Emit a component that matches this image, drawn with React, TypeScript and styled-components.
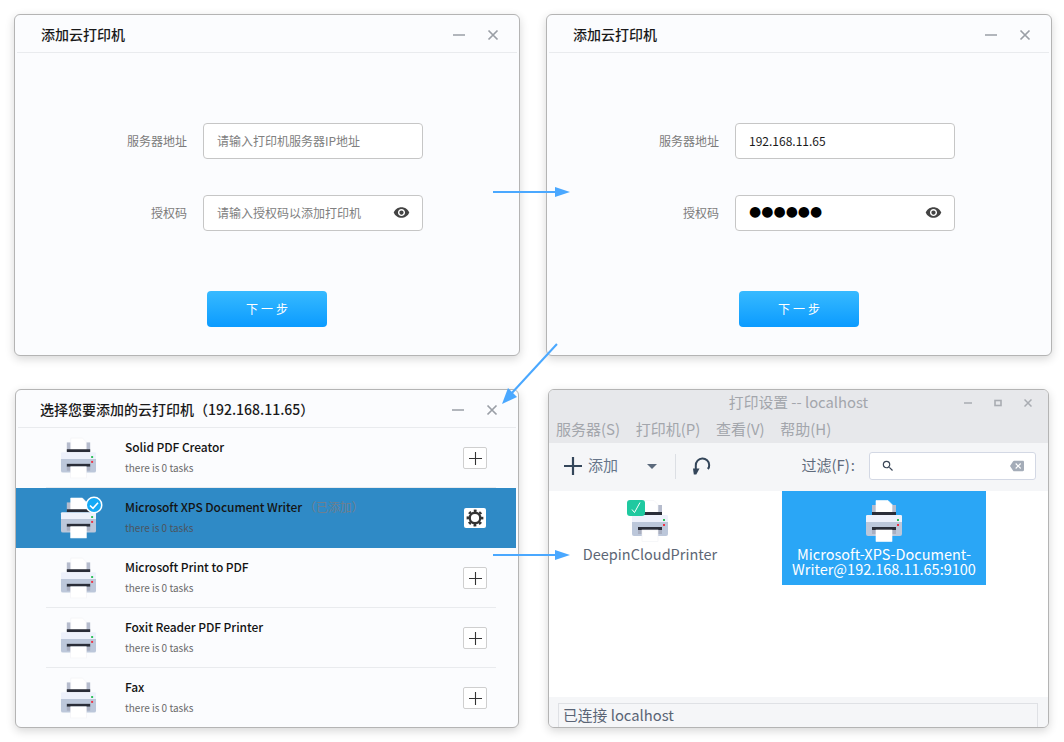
import React from "react";
import styled, { createGlobalStyle } from "styled-components";
import { MdVisibility, MdSearch, MdBackspace } from "react-icons/md";

const FONT = `"Noto Sans CJK SC", "Noto Sans", sans-serif`;

const Global = createGlobalStyle`
  html, body { margin: 0; padding: 0; background: #fff; }
  body { font-family: ${FONT}; overflow: hidden; }
  * { box-sizing: border-box; }
`;

const Desktop = styled.div`
  position: relative;
  width: 1064px;
  height: 742px;
  overflow: hidden;
  background: #fff;
`;

const Win = styled.section<{ $x: number; $y: number; $w: number; $h: number; $bg?: string }>`
  position: absolute;
  left: ${(p) => p.$x}px;
  top: ${(p) => p.$y}px;
  width: ${(p) => p.$w}px;
  height: ${(p) => p.$h}px;
  background: ${(p) => p.$bg || "#fbfcfe"};
  border: 1px solid #b4b4b4;
  border-radius: 6px;
  box-shadow: 0 3px 10px rgba(0, 0, 0, 0.16);
  display: flex;
  flex-direction: column;
  overflow: hidden;
`;

const Header = styled.header<{ $h: number; $pl: number; $pr: number }>`
  flex: none;
  height: ${(p) => p.$h}px;
  margin: 0 2px;
  padding: 1px ${(p) => p.$pr}px 0 ${(p) => p.$pl}px;
  display: flex;
  align-items: center;
  justify-content: space-between;
  border-bottom: 1px solid #e9ebee;
`;

const Title = styled.h1`
  margin: 0;
  font-size: 14px;
  font-weight: 500;
  color: #1a1a1a;
  white-space: nowrap;
`;

const Controls = styled.div`
  display: flex;
  align-items: center;
  gap: 22px;
  margin-top: 1px;
`;

const MinusIcon = () => (
  <svg width="12" height="12" viewBox="0 0 12 12">
    <path d="M0 6h12" stroke="#9a9fa6" strokeWidth="1.6" />
  </svg>
);
const CloseIcon = () => (
  <svg width="12" height="12" viewBox="0 0 12 12">
    <path d="M1.5 1.5l9 9M10.5 1.5l-9 9" stroke="#9a9fa6" strokeWidth="1.7" />
  </svg>
);

const Form = styled.div`
  padding: 70px 0 0 0;
  display: flex;
  flex-direction: column;
  gap: 36px;
`;

const Field = styled.div`
  display: grid;
  grid-template-columns: 172px 220px;
  column-gap: 16px;
  align-items: center;
  height: 36px;
`;

const Label = styled.label`
  font-size: 12px;
  color: #7b7b7b;
  text-align: right;
  padding-bottom: 2px;
`;

const InputBox = styled.div`
  height: 36px;
  border: 1px solid #c6c6c6;
  border-radius: 4px;
  background: #fff;
  display: flex;
  align-items: center;
  justify-content: space-between;
  padding: 0 13px 2px 13px;
  font-size: 12px;
`;

const Placeholder = styled.span`
  color: #808080;
`;
const Value = styled.span`
  color: #1b1b1b;
`;
const Dots = styled.span`
  font-family: "DejaVu Sans", sans-serif;
  font-size: 14px;
  color: #000;
  line-height: 1;
  margin-top: -3px;
`;
const EyeWrap = styled.span`
  display: flex;
  color: #444;
  font-size: 17px;
  margin-right: -1px;
`;

const NextButton = styled.button`
  display: block;
  margin: 60px auto 0;
  width: 120px;
  height: 36px;
  border: none;
  border-radius: 4px;
  background: linear-gradient(#37baff, #0b9bff);
  color: #fff;
  font-family: ${FONT};
  font-size: 12px;
  letter-spacing: 3px;
  padding: 0 0 2px 3px;
`;

const PrinterIcon = ({ paper = "#fff", edge = "#f1f2f5" }: { paper?: string; edge?: string }) => (
  <svg width="38" height="42" viewBox="0 0 38 42">
    <rect x="7" y="5" width="24" height="9" fill="#b6bccd" />
    <path d="M11 .5h12l4 4V14H11z" fill={paper} stroke={edge} strokeWidth=".6" />
    <rect x="7" y="12" width="24" height="3" fill="#2a2d38" />
    <path d="M2 15h34a1.500 1.500 0 0 1 1 1v6H1v-6a1.500 1.500 0 0 1 1-1z" fill="#eef1fb" />
    <path d="M1 22h36v12a2 2 0 0 1-2 2H3a2 2 0 0 1-2-2z" fill="#bcc7da" />
    <rect x="32" y="19" width="2" height="2" fill="#2ec05a" />
    <rect x="32" y="24" width="2" height="2" fill="#ee3344" />
    <rect x="7" y="27" width="24" height="3" fill="#2a2d38" />
    <rect x="7" y="30" width="24" height="4" fill="#a9afc1" />
    <rect x="11" y="30" width="16" height="11.500" fill={paper} stroke={edge} strokeWidth=".6" />
  </svg>
);

const List = styled.div`
  display: flex;
  flex-direction: column;
  margin-right: 2px;
`;

const Row = styled.div<{ $active?: boolean; $last?: boolean }>`
  position: relative;
  height: 60px;
  display: grid;
  grid-template-columns: 44px 37px 28px 1fr 22px;
  grid-template-rows: 60px;
  align-items: center;
  padding-right: 30px;
  background: ${(p) => (p.$active ? "#2f8ac6" : "transparent")};
  &::after {
    content: "";
    position: absolute;
    left: 30px;
    right: 20px;
    bottom: 0;
    height: 1px;
    background: ${(p) => (p.$active || p.$last ? "transparent" : "#e9ebee")};
  }
`;

const IconCell = styled.div`
  grid-column: 2;
  position: relative;
  display: flex;
`;

const CheckBadge = styled.span`
  position: absolute;
  left: 25px;
  top: -1px;
  display: flex;
`;

const RowText = styled.div`
  grid-column: 4;
  display: flex;
  flex-direction: column;
  gap: 6px;
  margin-top: -2px;
`;

const RowName = styled.div`
  font-size: 12px;
  line-height: 15px;
  font-weight: 500;
  letter-spacing: -0.07px;
  color: #141414;
  white-space: nowrap;
`;
const Added = styled.span`
  font-weight: 400;
  color: #6f7f8f;
  margin-left: 2px;
`;
const RowSub = styled.div<{ $active?: boolean }>`
  font-size: 10px;
  line-height: 15px;
  color: ${(p) => (p.$active ? "#4b5560" : "#6b6b6b")};
`;

const AddBtn = styled.button`
  grid-column: 5;
  width: 24px;
  height: 22px;
  margin-left: -1px;
  padding: 0;
  border: 1px solid #cfcfcf;
  border-radius: 2px;
  background: #fff;
  display: flex;
  align-items: center;
  justify-content: center;
`;
const GearBtn = styled.button`
  grid-column: 5;
  width: 22px;
  height: 20px;
  padding: 0;
  border: none;
  border-radius: 2px;
  background: #fff;
  display: flex;
  align-items: center;
  justify-content: center;
`;

const Plus = ({ size, w, color }: { size: number; w: number; color: string }) => (
  <svg width={size} height={size} viewBox={`0 0 ${size} ${size}`}>
    <path d={`M${size / 2} 0V${size}M0 ${size / 2}H${size}`} stroke={color} strokeWidth={w} />
  </svg>
);

const GearIcon = () => (
  <svg width="18" height="18" viewBox="0 0 18 18" fill="none" stroke="#333">
    <circle cx="9" cy="9" r="5.3" strokeWidth="2.4" />
    <circle cx="9" cy="9" r="7.2" strokeWidth="2.400" strokeDasharray="2.8 2.85" strokeDashoffset="1.4" />
  </svg>
);

const TitleBar = styled.div`
  flex: none;
  height: 26px;
  background: #e7e8eb;
  display: grid;
  grid-template-columns: 1fr auto;
  align-items: center;
  font-size: 14.8px;
  color: #a3a6ac;
  padding: 0 16px 0 0;
`;
const TitleCenter = styled.div`
  text-align: center;
  padding: 0 0 2px 84px;
  line-height: 24px;
`;
const NativeControls = styled.div`
  display: flex;
  gap: 22px;
  align-items: center;
`;
const MenuBar = styled.nav`
  flex: none;
  height: 27px;
  background: #e7e8eb;
  display: flex;
  gap: 15.6px;
  padding: 0 0 0 7px;
  font-size: 15px;
  line-height: 26px;
  color: #a3a6ac;
`;
const Toolbar = styled.div`
  flex: none;
  height: 48px;
  background: #f5f6f8;
  display: flex;
  align-items: center;
  padding: 0 12px 2px 15px;
`;
const ToolAdd = styled.span`
  font-size: 15px;
  color: #66758a;
  margin: -3px 0 0 6px;
`;
const Caret = styled.span`
  width: 0;
  height: 0;
  border-left: 5px solid transparent;
  border-right: 5px solid transparent;
  border-top: 5px solid #5c6a7c;
  margin: 1px 0 0 29px;
`;
const ToolSep = styled.span`
  width: 1px;
  height: 25px;
  background: #dcdfe4;
  margin: 0 17px 0 18px;
`;
const FilterLabel = styled.span`
  font-size: 15px;
  color: #5f6b7c;
  margin: -3px 0 0 auto;
  white-space: nowrap;
`;
const FilterColon = styled.span`
  margin-left: 1px;
`;
const Entry = styled.div`
  width: 167px;
  height: 28px;
  margin-left: 14px;
  background: #fff;
  border: 1px solid #d3d8e4;
  border-radius: 3px;
  display: flex;
  align-items: center;
  justify-content: space-between;
  padding: 0 11px 0 11px;
`;
const Icons = styled.div`
  flex: 1;
  background: #fff;
  display: grid;
  grid-template-columns: 202px 204px;
  column-gap: 31px;
  align-content: start;
`;
const Tile = styled.div<{ $selected?: boolean }>`
  height: 94px;
  padding-top: 9px;
  display: flex;
  flex-direction: column;
  align-items: center;
  background: ${(p) => (p.$selected ? "#2aa6f6" : "#fff")};
  color: ${(p) => (p.$selected ? "#fff" : "#5d6675")};
  font-size: 14.5px;
  line-height: 14.5px;
  text-align: center;
`;
const TileIcon = styled.div`
  position: relative;
  display: flex;
  height: 42px;
`;
const TileText = styled.div`
  margin-top: 5px;
`;
const GreenCheck = styled.span`
  position: absolute;
  left: -4px;
  top: 0;
  width: 18px;
  height: 16px;
  border-radius: 3px;
  background: #1fc9a0;
  display: flex;
  align-items: center;
  justify-content: center;
`;
const Status = styled.footer`
  flex: none;
  height: 30px;
  background: #f5f6f8;
  padding: 6px 10px 0 9px;
`;
const StatusBox = styled.div`
  height: 26px;
  border: 1px solid #dfe1e5;
  border-bottom: none;
  padding-left: 4px;
  font-size: 14.8px;
  line-height: 21px;
  color: #5a6475;
`;

const ArrowLayer = styled.svg`
  position: absolute;
  left: 0;
  top: 0;
  pointer-events: none;
`;

const printers = [
  { name: "Solid PDF Creator" },
  { name: "Microsoft XPS Document Writer", active: true },
  { name: "Microsoft Print to PDF" },
  { name: "Foxit Reader PDF Printer" },
  { name: "Fax", last: true },
];

const LoginWindow = ({ x, filled }: { x: number; filled?: boolean }) => (
  <Win $x={x} $y={14} $w={506} $h={342}>
    <Header $h={38} $pl={24} $pr={18}>
      <Title>添加云打印机</Title>
      <Controls>
        <MinusIcon />
        <CloseIcon />
      </Controls>
    </Header>
    <Form>
      <Field>
        <Label>服务器地址</Label>
        <InputBox>
          {filled ? <Value>192.168.11.65</Value> : <Placeholder>请输入打印机服务器IP地址</Placeholder>}
        </InputBox>
      </Field>
      <Field>
        <Label>授权码</Label>
        <InputBox>
          {filled ? <Dots>●●●●●●</Dots> : <Placeholder>请输入授权码以添加打印机</Placeholder>}
          <EyeWrap>
            <MdVisibility />
          </EyeWrap>
        </InputBox>
      </Field>
    </Form>
    <NextButton>下一步</NextButton>
  </Win>
);

export default function App() {
  return (
    <Desktop>
      <Global />
      <LoginWindow x={14} />
      <LoginWindow x={546} filled />

      <Win $x={15} $y={389} $w={504} $h={339}>
        <Header $h={38} $pl={22} $pr={18}>
          <Title>选择您要添加的云打印机（192.168.11.65）</Title>
          <Controls>
            <MinusIcon />
            <CloseIcon />
          </Controls>
        </Header>
        <List>
          {printers.map((p) => (
            <Row key={p.name} $active={p.active} $last={p.last}>
              <IconCell>
                <PrinterIcon edge={p.active ? "#fff" : "#f1f2f5"} />
                {p.active && (
                  <CheckBadge>
                    <svg width="18" height="18" viewBox="0 0 18 18">
                      <circle cx="9" cy="9" r="8.500" fill="#fff" />
                      <circle cx="9" cy="9" r="7" fill="#14a9f5" />
                      <path d="M5 9.500l3 2.800 5-5.600" fill="none" stroke="#fff" strokeWidth="1.600" />
                    </svg>
                  </CheckBadge>
                )}
              </IconCell>
              <RowText>
                <RowName>
                  {p.name}
                  {p.active && <Added>（已添加）</Added>}
                </RowName>
                <RowSub $active={p.active}>there is 0 tasks</RowSub>
              </RowText>
              {p.active ? (
                <GearBtn>
                  <GearIcon />
                </GearBtn>
              ) : (
                <AddBtn>
                  <Plus size={13} w={1.1} color="#333" />
                </AddBtn>
              )}
            </Row>
          ))}
        </List>
      </Win>

      <Win $x={548} $y={389} $w={501} $h={339} $bg="#f5f6f8">
        <TitleBar>
          <TitleCenter>打印设置 -- localhost</TitleCenter>
          <NativeControls>
            <svg width="8" height="8" viewBox="0 0 8 8">
              <path d="M0 4h8" stroke="#a9acb2" strokeWidth="1.500" />
            </svg>
            <svg width="8" height="8" viewBox="0 0 8 8">
              <rect x="1" y="1.500" width="6" height="5" fill="none" stroke="#a9acb2" strokeWidth="1.600" />
            </svg>
            <svg width="8" height="8" viewBox="0 0 8 8">
              <path d="M.5.500l7 7M7.500.500l-7 7" stroke="#a9acb2" strokeWidth="1.500" />
            </svg>
          </NativeControls>
        </TitleBar>
        <MenuBar>
          <span>服务器(S)</span>
          <span>打印机(P)</span>
          <span>查看(V)</span>
          <span>帮助(H)</span>
        </MenuBar>
        <Toolbar>
          <Plus size={18} w={2.2} color="#34465a" />
          <ToolAdd>添加</ToolAdd>
          <Caret />
          <ToolSep />
          <svg width="18" height="18" viewBox="0 0 18 18">
            <path d="M2.800 13V8.500a6.700 6.700 0 0 1 13.400-.5c.1 1.600-.4 2.900-1.400 4" fill="none" stroke="#34465a" strokeWidth="2" />
            <path d="M0 11.500h6.500L3.300 17.500H.8z" fill="#34465a" />
          </svg>
          <FilterLabel>
            过滤(F)
            <FilterColon>:</FilterColon>
          </FilterLabel>
          <Entry>
            <MdSearch size={14} color="#3a4656" />
            <MdBackspace size={14} color="#a4acb8" />
          </Entry>
        </Toolbar>
        <Icons>
          <Tile>
            <TileIcon>
              <PrinterIcon />
              <GreenCheck>
                <svg width="12" height="12" viewBox="0 0 12 12">
                  <path d="M2 7.500l2.500 3L10 .500" fill="none" stroke="#fff" strokeWidth="1" />
                </svg>
              </GreenCheck>
            </TileIcon>
            <TileText>DeepinCloudPrinter</TileText>
          </Tile>
          <Tile $selected>
            <TileIcon>
              <PrinterIcon edge="#fff" />
            </TileIcon>
            <TileText>
              Microsoft-XPS-Document-
              <br />
              Writer@192.168.11.65:9100
            </TileText>
          </Tile>
        </Icons>
        <Status>
          <StatusBox>已连接 localhost</StatusBox>
        </Status>
      </Win>

      <ArrowLayer width="1064" height="742" viewBox="0 0 1064 742">
        <g fill="#4aa8ff" stroke="none">
          <rect x="493" y="191" width="65" height="2" />
          <path d="M555 187l15 5-15 5z" />
          <rect x="493" y="554" width="65" height="2" />
          <path d="M555 550l15 5-15 5z" />
          <path d="M556.200 343.300l1.500 1.400-46 50-1.500-1.400z" />
          <path d="M502 404l6-16 9 9z" />
        </g>
      </ArrowLayer>
    </Desktop>
  );
}
